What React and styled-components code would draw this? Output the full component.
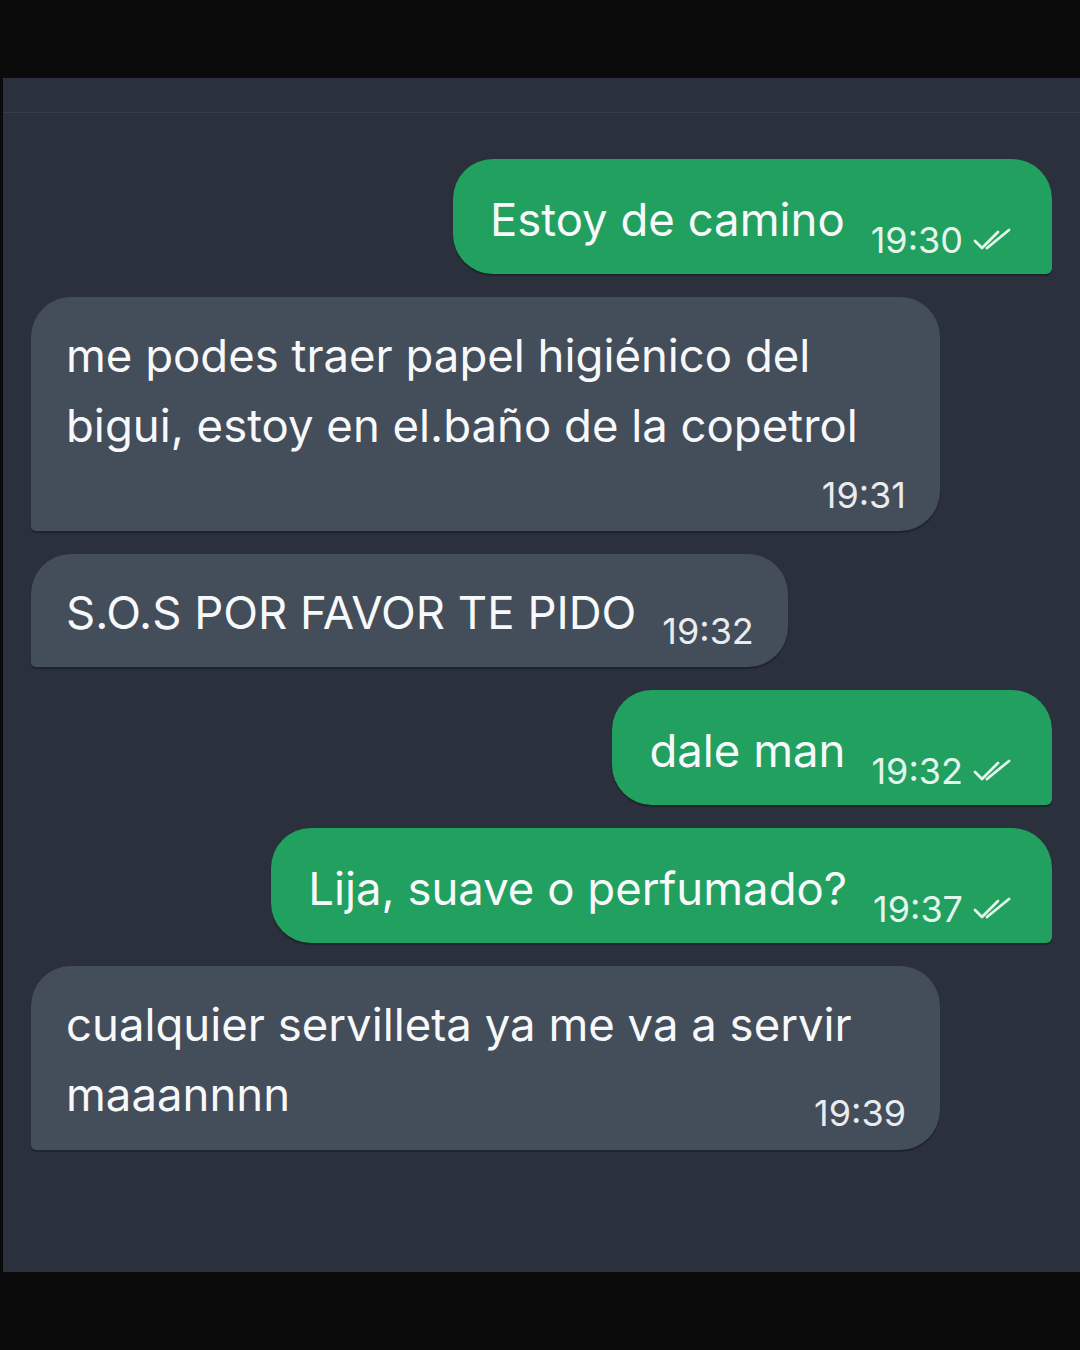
import React from "react"
import styled, { createGlobalStyle, css } from "styled-components"

const GlobalStyle = createGlobalStyle`
  html, body {
    margin: 0;
    padding: 0;
    background: #0b0b0b;
  }
  body {
    font-family: Inter, "Noto Sans", "Liberation Sans", sans-serif;
  }
`

const Frame = styled.div`
  width: 1080px;
  height: 1350px;
  padding-top: 78px;
  box-sizing: border-box;
  background: #0b0b0b;
`

const Screen = styled.div`
  margin-left: 3px;
  height: 1194px;
  background: #2b303d;
  display: flex;
  flex-direction: column;
`

const TopBar = styled.div`
  height: 34px;
  flex-shrink: 0;
  border-bottom: 1px solid #363b49;
`

const Messages = styled.div`
  display: flex;
  flex-direction: column;
  gap: 23px;
  padding: 46px 28px 0 28px;
`

const Row = styled.div`
  display: flex;
  justify-content: ${p => (p.out ? "flex-end" : "flex-start")};
`

const Bubble = styled.div`
  box-sizing: border-box;
  color: #f7f8f9;
  font-size: 45.5px;
  line-height: 70px;
  box-shadow: 0 2px 1px rgba(10, 12, 18, 0.35);

  ${p =>
    p.out
      ? css`
          background: #21a05f;
          border-radius: 40px 40px 6px 40px;
          padding: 26px 39px 19px 37px;
        `
      : css`
          background: #444d5a;
          border-radius: 40px 40px 40px 5px;
          padding: 24px 34px 19px 35px;
        `}

  ${p =>
    p.inline &&
    css`
      display: flex;
      align-items: flex-end;
      gap: 26px;
    `}

  ${p =>
    p.wide &&
    css`
      width: 909px;
    `}
`

const Text = styled.div`
  white-space: pre-wrap;
`

const LastLine = styled.div`
  display: flex;
  justify-content: space-between;
  align-items: flex-end;
`

const Meta = styled.span`
  display: inline-flex;
  align-items: center;
  gap: 10px;
  font-size: 36px;
  line-height: 44px;
  white-space: nowrap;
  color: ${p => (p.out ? "#e4f6ec" : "#e9ecef")};
  margin-bottom: ${p => p.drop || 0}px;
`

const MetaBlock = styled.div`
  display: flex;
  justify-content: flex-end;
  margin-top: 12px;
`

const Checks = () => (
  <svg width="40" height="24" viewBox="0 0 40 24" fill="none">
    <path
      d="M2 13 L9 20 L25 4"
      stroke="#e4f6ec"
      strokeWidth="2.8"
      strokeLinecap="round"
      strokeLinejoin="round"
    />
    <path
      d="M14 20 L36 2"
      stroke="#e4f6ec"
      strokeWidth="2.8"
      strokeLinecap="round"
      strokeLinejoin="round"
    />
  </svg>
)

const Out = ({ text, time }) => (
  <Row out>
    <Bubble out inline>
      <Text>{text}</Text>
      <Meta out drop={-7}>
        {time}
        <Checks />
      </Meta>
    </Bubble>
  </Row>
)

export default function App() {
  return (
    <>
      <GlobalStyle />
      <Frame>
        <Screen>
          <TopBar />
          <Messages>
            <Out text="Estoy de camino" time="19:30" />

            <Row>
              <Bubble wide style={{ paddingBottom: 14 }}>
                <Text>me podes traer papel higiénico del bigui, estoy en el.baño de la copetrol</Text>
                <MetaBlock>
                  <Meta>19:31</Meta>
                </MetaBlock>
              </Bubble>
            </Row>

            <Row>
              <Bubble inline>
                <Text>S.O.S POR FAVOR TE PIDO</Text>
                <Meta drop={-5}>19:32</Meta>
              </Bubble>
            </Row>

            <Out text="dale man" time="19:32" />
            <Out text="Lija, suave o perfumado?" time="19:37" />

            <Row>
              <Bubble wide style={{ paddingBottom: 20 }}>
                <Text>cualquier servilleta ya me va a servir</Text>
                <LastLine>
                  <Text>maaannnn</Text>
                  <Meta drop={-5}>19:39</Meta>
                </LastLine>
              </Bubble>
            </Row>
          </Messages>
        </Screen>
      </Frame>
    </>
  )
}
